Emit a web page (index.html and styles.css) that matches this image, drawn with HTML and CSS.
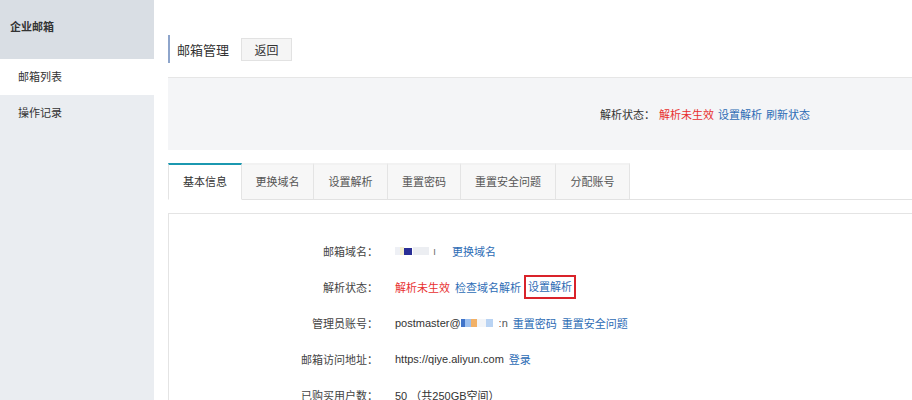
FILE: index.html
```html
<!DOCTYPE html>
<html lang="zh-CN">
<head>
<meta charset="utf-8">
<title>邮箱管理</title>
<link rel="stylesheet" href="styles.css">
</head>
<body>
<div class="app">
  <aside class="sidebar">
    <div class="side-head">企业邮箱</div>
    <div class="side-item active">邮箱列表</div>
    <div class="side-item">操作记录</div>
  </aside>
  <main class="main">
    <div class="crumb">
      <span class="crumb-title">邮箱管理</span>
      <button class="btn">返回</button>
    </div>
    <div class="status-bar">
      <span class="lbl">解析状态：</span>
      <span class="red">解析未生效</span>
      <a class="link">设置解析</a>
      <a class="link">刷新状态</a>
    </div>
    <div class="tabs">
      <div class="tab active w74">基本信息</div>
      <div class="tab w72">更换域名</div>
      <div class="tab w74">设置解析</div>
      <div class="tab w73">重置密码</div>
      <div class="tab w95">重置安全问题</div>
      <div class="tab w74">分配账号</div>
    </div>
    <div class="panel">
      <div class="row">
        <div class="label">邮箱域名：</div>
        <div class="value">
          <span class="masked"><span class="blur"><i class="b1"></i><i class="b2"></i><i class="b3"></i><i class="b4"></i></span><span class="faint">ı</span></span>
          <a class="link">更换域名</a>
        </div>
      </div>
      <div class="row">
        <div class="label">解析状态：</div>
        <div class="value">
          <span class="red">解析未生效</span>
          <a class="link">检查域名解析</a><span class="boxed"><a class="link">设置解析</a></span>
        </div>
      </div>
      <div class="row">
        <div class="label">管理员账号：</div>
        <div class="value">
          <span class="masked">postmaster@<span class="blur"><i class="c1"></i><i class="c2"></i><i class="c3"></i><i class="c4"></i><i class="c5"></i></span><span class="faint2">:n</span></span>
          <a class="link">重置密码</a>
          <a class="link">重置安全问题</a>
        </div>
      </div>
      <div class="row">
        <div class="label">邮箱访问地址：</div>
        <div class="value">
          <span>https://qiye.aliyun.com</span>
          <a class="link">登录</a>
        </div>
      </div>
      <div class="row">
        <div class="label">已购买用户数：</div>
        <div class="value">
          <span>50 （共250GB空间）</span>
        </div>
      </div>
    </div>
  </main>
</div>
</body>
</html>
```
FILE: styles.css
```css
* { box-sizing: border-box; }
html, body { margin: 0; padding: 0; }
body {
  font-family: "Liberation Sans", "Noto Sans CJK SC", sans-serif;
  font-size: 11px;
  color: #333;
  background: #fff;
  width: 912px;
  height: 400px;
  overflow: hidden;
}
.app { display: flex; height: 400px; }
.sidebar {
  width: 154px;
  flex: none;
  background: #eaedf1;
}
.side-head {
  height: 59px;
  background: #d9dee4;
  padding: 18px 0 0 10px;
  line-height: 18px;
  font-weight: bold;
  color: #333;
}
.side-item {
  height: 36px;
  line-height: 36px;
  padding-left: 18px;
  color: #333;
}
.side-item.active { background: #fff; }
.main {
  flex: 1;
  padding-left: 14px;
  min-width: 0;
}
.crumb {
  margin-top: 35px;
  height: 28px;
  display: flex;
  align-items: center;
  border-left: 2px solid #8ea5cb;
  padding-left: 7px;
}
.crumb-title { font-size: 13px; color: #333; }
.btn {
  margin-left: 12px;
  width: 51px;
  height: 23px;
  border: 1px solid #e2e2e2;
  background: #f5f5f5;
  font: inherit;
  font-size: 12px;
  color: #333;
  padding: 0;
}
.status-bar {
  margin-top: 14px;
  height: 73px;
  background: #f4f5f7;
  border-top: 1px solid #e6e6e6;
  display: flex;
  align-items: center;
  padding-left: 432px;
  gap: 4px;
}
.status-bar .lbl { color: #333; }
.red { color: #e8302f; }
.link { color: #2d6cb5; cursor: pointer; }
.tabs {
  margin-top: 13px;
  height: 37px;
  display: flex;
  border-bottom: 1px solid #e2e2e2;
}
.tab {
  height: 37px;
  line-height: 34px;
  text-align: center;
  background: #f7f7f7;
  border-top: 2px solid #f2f2f2;
  border-right: 1px solid #e4e4e4;
  border-bottom: 1px solid #e2e2e2;
  color: #555;
}
.tab.active {
  background: #fff;
  border-top: 2px solid #1b98b0;
  border-left: 1px solid #e4e4e4;
  border-bottom-color: #fff;
  color: #333;
}
.w72 { width: 72px; }
.w73 { width: 73px; }
.w74 { width: 74px; }
.w95 { width: 95px; }
.panel {
  margin-top: 13px;
  border-top: 1px solid #e4e4e4;
  border-left: 1px solid #e4e4e4;
  padding-top: 19px;
  height: 200px;
}
.row {
  display: flex;
  height: 36px;
  align-items: center;
}
.label {
  width: 209px;
  text-align: right;
  color: #444;
  flex: none;
}
.value {
  margin-left: 17px;
  display: flex;
  align-items: center;
  gap: 5px;
  white-space: nowrap;
  color: #333;
}
.masked { display: inline-flex; align-items: center; }
.blur { display: inline-flex; align-items: center; height: 10px; }
.blur i { display: inline-block; height: 8px; }
.b1 { width: 5px; background: #eef0f5; }
.b2 { width: 4px; background: #f4efcf; }
.b3 { width: 8px; height: 7px !important; background: #2a2f96; }
.b4 { width: 16px; background: #eceef2; margin-left: 1px; }
.c1 { width: 4px; background: #3f73c9; }
.c2 { width: 6px; background: #9cc0ef; }
.c3 { width: 6px; background: #f2b167; }
.c4 { width: 9px; background: #f3f5f8; }
.c5 { width: 7px; background: #b9d3f3; }
.faint { color: #777; margin-left: 4px; margin-right: 11px; font-size: 11px; }
.faint2 { color: #555; margin-left: 6px; }
.boxed {
  border: 2px solid #d9232a;
  padding: 0 2px;
  height: 24px;
  line-height: 20px;
  margin-left: -2px;
}
```
